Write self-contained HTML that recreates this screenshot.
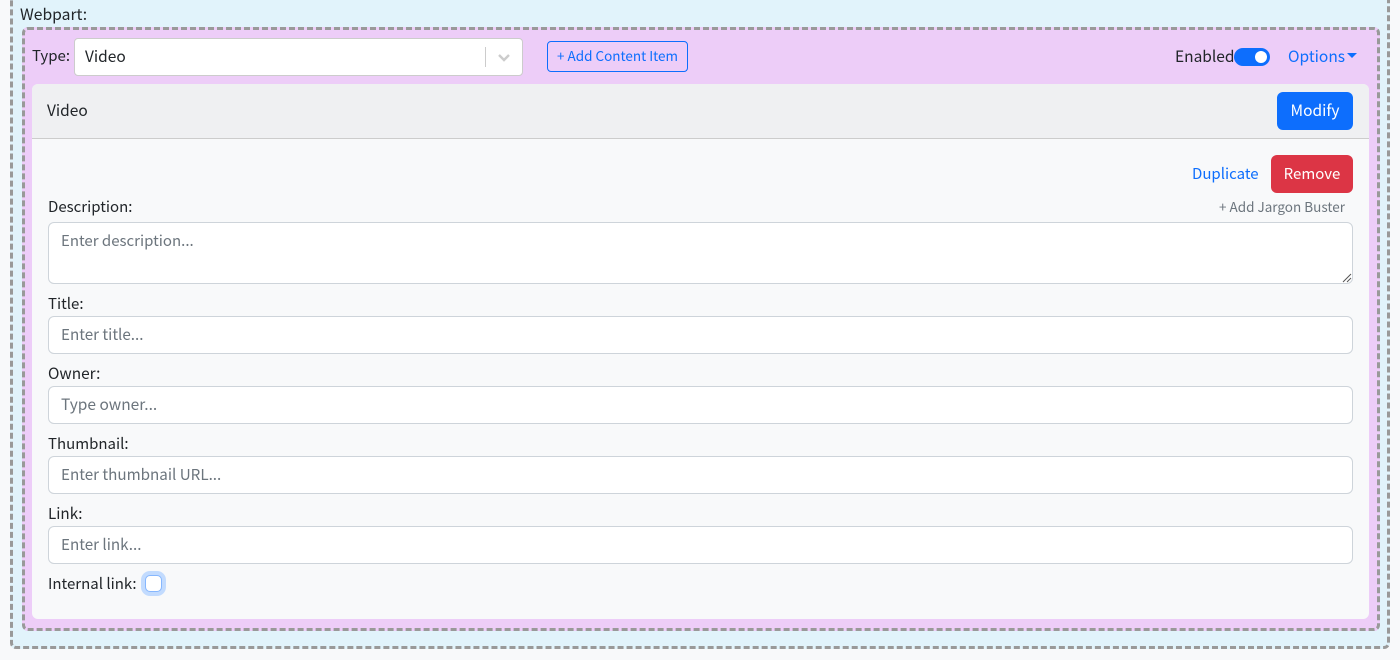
<!DOCTYPE html>
<html><head><meta charset="utf-8"><style>
*{box-sizing:border-box}
html,body{margin:0;padding:0;width:1400px;height:660px;overflow:hidden;background:#f8f9fa}
body{position:relative;font-family:"Noto Sans CJK JP",sans-serif;font-size:15.2px;line-height:24px;color:#212529}
.a{position:absolute;white-space:nowrap}
.inp{position:absolute;left:48px;width:1305px;height:38px;background:#fff;border:1px solid #ced4da;border-radius:6px;padding:5px 12px;color:#6c757d}
.lab{position:absolute;left:48px;white-space:nowrap}
</style></head><body>
<div class="a" style="left:10px;top:-20px;width:1380px;height:669px;background:#e1f3fb;border:3px dashed #999;border-radius:6px"></div>
<div class="a" style="left:20px;top:2px;font-size:15.7px">Webpart:</div>
<div class="a" style="left:22px;top:27px;width:1358px;height:604px;background:#edcdf8;border:3px dashed #999;border-radius:6px"></div>
<div class="a" style="left:32px;top:44px;font-size:15px">Type:</div>
<div class="a" style="left:74px;top:38px;width:449px;height:38px;background:#fff;border:1px solid #ccc;border-radius:4px;padding:5px 10px;font-size:15.5px">Video
<div class="a" style="left:410px;top:8px;width:1px;height:20px;background:#ccc"></div>
<svg class="a" style="left:419px;top:8px" width="20" height="20" viewBox="0 0 20 20"><path d="M5 8l5 5 5-5" fill="none" stroke="#ccc" stroke-width="2.4"/></svg>
</div>
<div class="a" style="left:547px;top:41px;width:141px;height:31px;border:1px solid #0d6efd;border-radius:4px;color:#0d6efd;font-size:13.5px;line-height:26px;text-align:center">+ Add Content Item</div>
<div class="a" style="left:1175px;top:44px;font-size:15.5px">Enabled:</div>
<div class="a" style="left:1234px;top:48px;width:36px;height:18px;background:#0d6efd;border-radius:9px"><div class="a" style="left:21px;top:3px;width:12px;height:12px;background:#fff;border-radius:50%"></div></div>
<div class="a" style="left:1288px;top:44px;color:#0d6efd;font-size:15.5px">Options</div>
<div class="a" style="left:1347px;top:53px;width:0;height:0;border-left:5px solid transparent;border-right:5px solid transparent;border-top:5px solid #0d6efd"></div>
<div class="a" style="left:32px;top:84px;width:1337px;height:535px;background:#f8f9fa;border-radius:6px"></div>
<div class="a" style="left:32px;top:84px;width:1337px;height:55px;background:#eff0f2;border-bottom:1px solid #ccc;border-radius:6px 6px 0 0"></div>
<div class="a" style="left:47px;top:98px;font-size:15.5px">Video</div>
<div class="a" style="left:1277px;top:92px;width:76px;height:38px;background:#0d6efd;border-radius:6px;color:#fff;line-height:36px;text-align:center;font-size:15.5px">Modify</div>
<div class="a" style="left:1192px;top:162px;color:#0d6efd;font-size:15px">Duplicate</div>
<div class="a" style="left:1271px;top:155px;width:82px;height:38px;background:#dc3545;border-radius:6px;color:#fff;line-height:37px;text-align:center;font-size:15px">Remove</div>
<div class="lab" style="top:195px;font-size:15px">Description:</div>
<div class="a" style="left:1219px;top:194px;font-size:13.5px;color:#6c757d">+ Add Jargon Buster</div>
<div class="inp" style="top:222px;height:62px;font-size:15px;padding-top:6px">Enter description...
<svg class="a" style="right:0;bottom:0" width="10" height="10" viewBox="0 0 10 10"><path d="M1 9L9 1M5 9L9 5" stroke="#555" stroke-width="1"/></svg></div>
<div class="lab" style="top:292px;font-size:15px">Title:</div>
<div class="inp" style="top:316px">Enter title...</div>
<div class="lab" style="top:361px;font-size:15.4px">Owner:</div>
<div class="inp" style="top:386px;font-size:15.5px">Type owner...</div>
<div class="lab" style="top:432px;font-size:15px">Thumbnail:</div>
<div class="inp" style="top:456px">Enter thumbnail URL...</div>
<div class="lab" style="top:501px">Link:</div>
<div class="inp" style="top:526px">Enter link...</div>
<div class="lab" style="top:572px;font-size:15px">Internal link:</div>
<div class="a" style="left:145px;top:575px;width:17px;height:17px;background:#fff;border:1px solid #86b7fe;border-radius:5px;box-shadow:0 0 0 4px #c2dbfe"></div>
</body></html>
